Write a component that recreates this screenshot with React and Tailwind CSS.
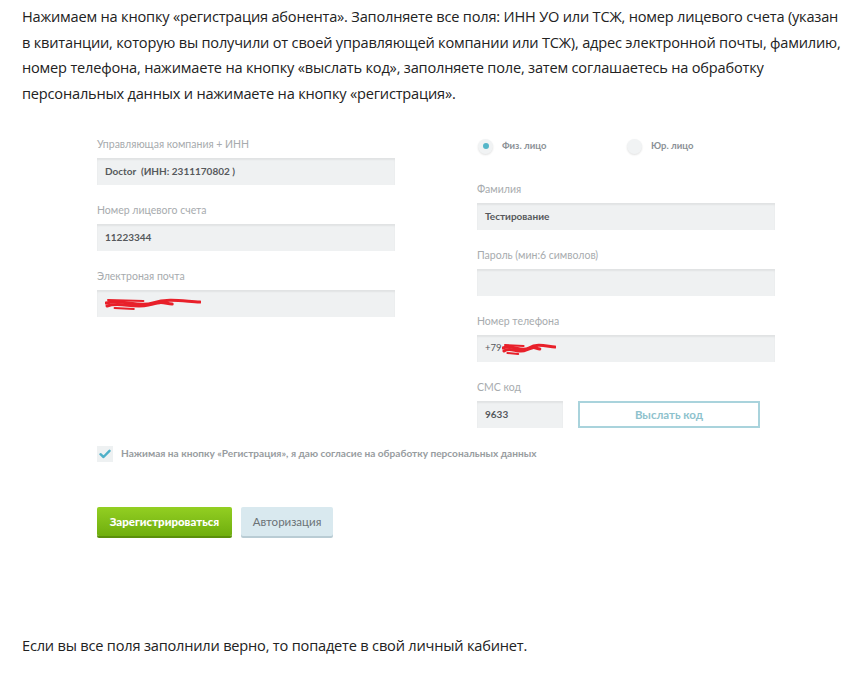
import { useState } from "react";

function Label({ children }) {
  return <div className="h-[14px] mb-[7px] text-[10.5px] leading-[14px] text-[#a7abae]">{children}</div>;
}

function Field({ label, children }) {
  return (
    <div className="mb-[18px]">
      <Label>{label}</Label>
      {children}
    </div>
  );
}

function Box({ className = "", children }) {
  return (
    <div
      className={
        "h-[27px] bg-[#eff1f2] shadow-[inset_0_2px_2px_rgba(0,0,0,0.06)] px-[8px] flex items-center text-[10px] font-bold text-[#56595c] " +
        className
      }
    >
      {children}
    </div>
  );
}

function Scribble({ w }) {
  // red marker over the redacted value
  return (
    <svg width={w} height="14" viewBox={`0 0 ${w} 14`} className="block">
      <path
        d={`M1 6 C ${w * 0.2} 2, ${w * 0.35} 11, ${w * 0.5} 6 S ${w * 0.8} 4, ${w - 1} 5`}
        stroke="#e8202a"
        strokeWidth="3"
        fill="none"
        strokeLinecap="round"
      />
      <path
        d={`M2 9 C ${w * 0.15} 4, ${w * 0.3} 12, ${w * 0.45} 8 S ${w * 0.6} 6, ${w * 0.7} 7`}
        stroke="#e8202a"
        strokeWidth="3"
        fill="none"
        strokeLinecap="round"
      />
      <path d={`M3 3 L ${w * 0.4} 4 M${w * 0.1} 11 L ${w * 0.3} 12`} stroke="#e8202a" strokeWidth="2" strokeLinecap="round" />
    </svg>
  );
}

function Radio({ checked, label }) {
  return (
    <div className="flex items-center gap-[9px]">
      <span className="w-[15px] h-[15px] rounded-full bg-[#f1f3f4] shadow-[0_1px_2px_rgba(0,0,0,0.12)] flex items-center justify-center">
        {checked && <span className="w-[6px] h-[6px] rounded-full bg-[#55b6c9]" />}
      </span>
      <span className="text-[9.5px] font-bold text-[#8b9196]">{label}</span>
    </div>
  );
}

export default function App() {
  const [agree, setAgree] = useState(true);
  const [type, setType] = useState("phys");

  return (
    <div className="w-[859px] h-[682px] bg-white text-[#222] font-['Open_Sans',sans-serif] overflow-hidden">
      {/* INTRO */}
      <p className="pt-[4px] pl-[22px] text-[14.6px] leading-[25.5px] tracking-[-0.2px] whitespace-nowrap">
        Нажимаем на кнопку «регистрация абонента». Заполняете все поля: ИНН УО или ТСЖ, номер лицевого счета (указан
        <br />
        в квитанции, которую вы получили от своей управляющей компании или ТСЖ), адрес электронной почты, фамилию,
        <br />
        номер телефона, нажимаете на кнопку «выслать код», заполняете поле, затем соглашаетесь на обработку
        <br />
        персональных данных и нажимаете на кнопку «регистрация».
      </p>

      {/* FORM */}
      <div className="mt-[31px] ml-[97px] font-['Lato',sans-serif]">
        <div className="flex gap-[82px]">
          {/* LEFT */}
          <div className="w-[298px]">
            <Field label="Управляющая компания + ИНН">
              <Box>Doctor&nbsp; (ИНН: 2311170802 )</Box>
            </Field>
            <Field label="Номер лицевого счета">
              <Box>11223344</Box>
            </Field>
            <Field label="Электроная почта">
              <Box className="px-[4px]">
                <Scribble w={96} />
              </Box>
            </Field>
          </div>

          {/* RIGHT */}
          <div className="w-[298px]">
            <div className="h-[18px] mb-[27px] flex items-center pl-[1px]" onClick={() => setType(type === "phys" ? "jur" : "phys")}>
              <div className="w-[149px]">
                <Radio checked={type === "phys"} label="Физ. лицо" />
              </div>
              <Radio checked={type === "jur"} label="Юр. лицо" />
            </div>
            <Field label="Фамилия">
              <Box>Тестирование</Box>
            </Field>
            <Field label="Пароль (мин:6 символов)">
              <Box />
            </Field>
            <Field label="Номер телефона">
              <Box>
                <span className="font-normal text-[9.5px]">+79</span>
                <Scribble w={54} />
              </Box>
            </Field>
            <div>
              <Label>СМС код</Label>
              <div className="flex gap-[15px]">
                <Box className="w-[86px]">9633</Box>
                <button className="w-[182px] h-[27px] border-2 border-[#a9d3dc] bg-white text-[11.5px] font-bold text-[#8ec2cd]">
                  Выслать код
                </button>
              </div>
            </div>
          </div>
        </div>

        {/* AGREEMENT */}
        <div className="mt-[18px] flex items-center gap-[8px]" onClick={() => setAgree(!agree)}>
          <span className="w-[16px] h-[16px] bg-[#eef1f2] flex items-center justify-center">
            {agree && (
              <svg width="12" height="10" viewBox="0 0 12 10">
                <path d="M1.5 5.2 L4.5 8 L10.5 1.8" stroke="#4fb0c8" strokeWidth="2.4" fill="none" strokeLinecap="round" strokeLinejoin="round" />
              </svg>
            )}
          </span>
          <span className="text-[10.1px] font-bold text-[#979ca0]">
            Нажимая на кнопку «Регистрация», я даю согласие на обработку персональных данных
          </span>
        </div>

        {/* ACTIONS */}
        <div className="mt-[45px] flex gap-[9px]">
          <button className="w-[135px] h-[29px] rounded-[2px] bg-gradient-to-b from-[#93cf22] to-[#6fae0d] shadow-[0_2px_0_#5a8f0a] text-white text-[11.5px] font-black">
            Зарегистрироваться
          </button>
          <button className="w-[92px] h-[29px] rounded-[2px] bg-[#d9e9ef] shadow-[0_2px_0_#b9ccd4] text-[#6b7276] text-[11.5px]">
            Авторизация
          </button>
        </div>
      </div>

      {/* OUTRO */}
      <p className="mt-[97px] pl-[22px] text-[14.6px] leading-[25px] tracking-[-0.2px]">
        Если вы все поля заполнили верно, то попадете в свой личный кабинет.
      </p>
    </div>
  );
}
